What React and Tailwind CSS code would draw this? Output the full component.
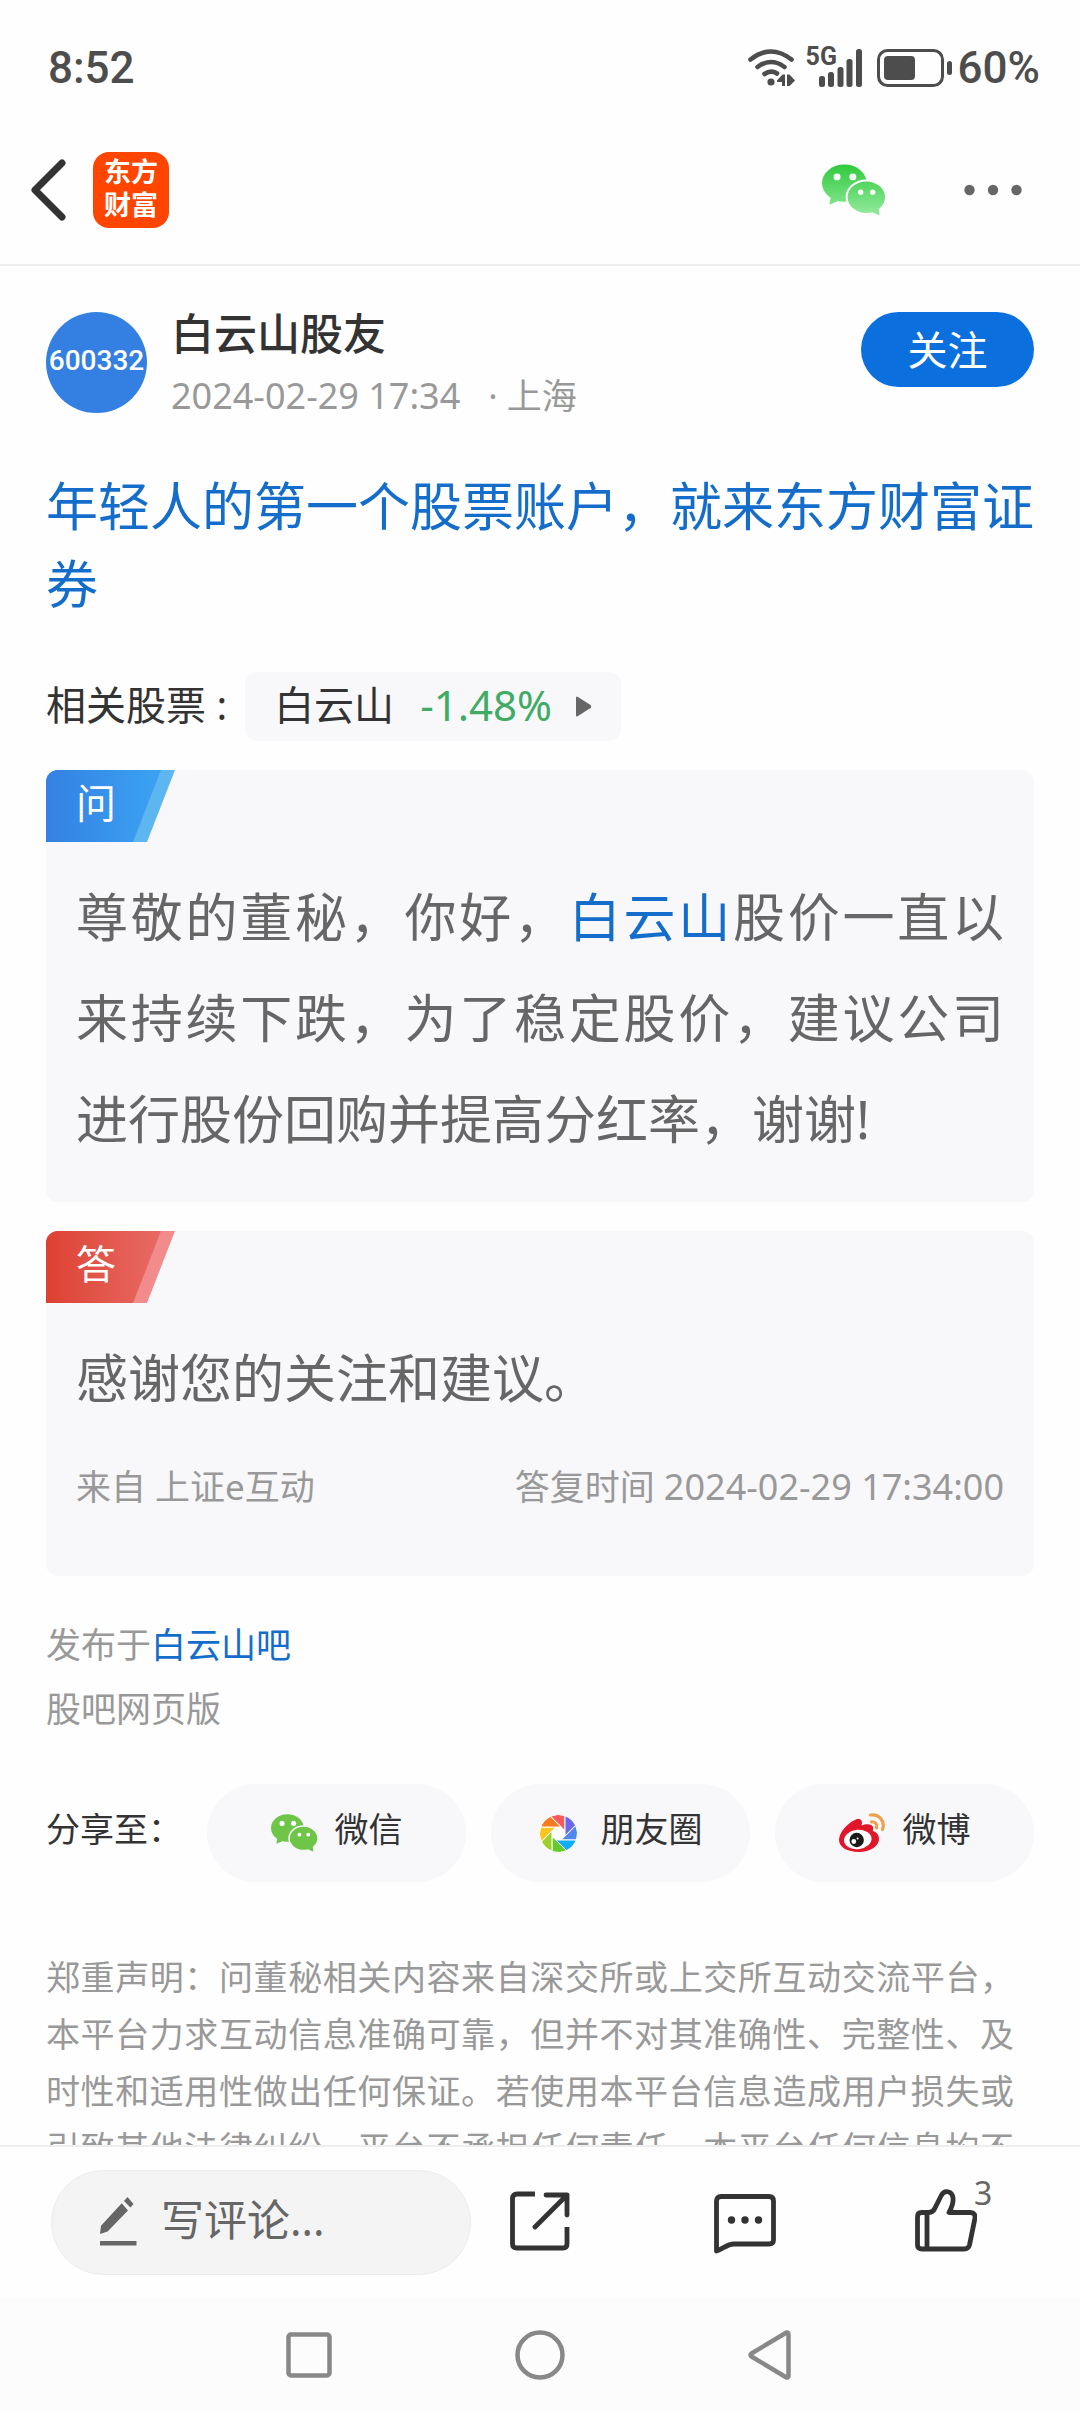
import { useState } from "react";

const SHUTTER_COLORS = [
  "#f65a5a",
  "#6a68e8",
  "#5287ee",
  "#10adfa",
  "#62cc2c",
  "#a0d02c",
  "#fac51e",
  "#f87a20",
];

const disclaimer =
  "郑重声明：问董秘相关内容来自深交所或上交所互动交流平台，本平台力求互动信息准确可靠，但并不对其准确性、完整性、及时性和适用性做出任何保证。若使用本平台信息造成用户损失或引致其他法律纠纷，平台不承担任何责任。本平台任何信息均不";

export default function App() {
  return (
    <div className="flex h-screen flex-col bg-[#fefefe] font-['Noto_Sans','Noto_Sans_CJK_SC',sans-serif] text-[#333333]">
      <StatusBar />
      <Header />
      <main className="min-h-0 flex-1 overflow-hidden px-[46px] pt-[46px]">
        <Author />
        <h1 className="mt-[54px] text-[52px] leading-[78px] text-[#146dcb]">
          年轻人的第一个股票账户，就来东方财富证券
        </h1>
        <RelatedStock />

        <QaCard label="问" type="question">
          <p className="text-justify text-[52px] leading-[101px] text-[#666666]">
            尊敬的董秘，你好，
            <a href="#stock" className="text-[#146dcb]">
              白云山
            </a>
            股价一直以来持续下跌，为了稳定股价，建议公司进行股份回购并提高分红率，谢谢!
          </p>
        </QaCard>

        <QaCard label="答" type="answer">
          <p className="text-[52px] leading-[101px] text-[#666666]">
            感谢您的关注和建议。
          </p>
          <div className="mt-[34px] mb-[31px] flex justify-between text-[35px] leading-[50px] text-[#999999]">
            <span>来自 上证e互动</span>
            <span>
              答复时间 <time className="text-[36px]">2024-02-29 17:34:00</time>
            </span>
          </div>
        </QaCard>

        <div className="mt-[37px] text-[35px] leading-[64px] text-[#999999]">
          <p>
            发布于
            <a href="#bar" className="text-[#146dcb]">
              白云山吧
            </a>
          </p>
          <p>股吧网页版</p>
        </div>

        <ShareRow />

        <p className="mt-[67px] pr-5 text-justify text-[34px] leading-[57px] text-[#999999] [text-align-last:justify]">
          {disclaimer}
        </p>
      </main>
      <BottomBar />
      <SystemNav />
    </div>
  );
}

const StatusBar = () => {
  return (
    <div className="flex h-[136px] shrink-0 items-center justify-between pr-10 pl-12 font-[Roboto,'Noto_Sans_CJK_SC',sans-serif] text-[44px] leading-[64px] font-medium text-[#4d4d4d]">
      <span>8:52</span>
      <div className="flex items-center">
        <svg width="48" height="38" viewBox="0 0 48 38" fill="none" stroke="currentColor" strokeLinecap="round">
          <path d="M2.5 10.5Q23-5.5 43.5 10.5" strokeWidth="4.6" />
          <path d="M9.5 18Q23 8 36.5 18" strokeWidth="4.6" />
          <path d="M16.5 25Q23 20.5 29 24.5" strokeWidth="4.6" />
          <circle cx="23" cy="33" r="3.6" fill="currentColor" stroke="none" />
          <path
            d="M29 31.5 34.5 25.5H37V37H34V33H29ZM39 25.5H41.5L47 31.5 41.5 37H39Z"
            fill="currentColor"
            stroke="none"
          />
        </svg>
        <div className="relative ml-[22px]">
          <span className="absolute -top-2 -left-3 text-[25px] leading-[32px] font-bold">
            5G
          </span>
          <svg width="45" height="38" viewBox="0 0 45 38" fill="currentColor">
            <rect x="1" y="27" width="6" height="11" rx="2.5" />
            <rect x="10" y="23" width="6" height="15" rx="2.5" />
            <rect x="19.5" y="18" width="6" height="20" rx="2.5" />
            <rect x="28.5" y="10" width="6" height="28" rx="2.5" />
            <rect x="38" y="0" width="6" height="38" rx="2.5" />
          </svg>
        </div>
        <svg className="ml-[14px]" width="77" height="38" viewBox="0 0 77 38" fill="currentColor">
          <rect x="1.5" y="1.5" width="64" height="35" rx="9" fill="none" stroke="currentColor" strokeWidth="3" />
          <rect x="7" y="7" width="31" height="24" rx="4" />
          <rect x="70" y="12" width="5" height="14" rx="2.5" />
        </svg>
        <span className="ml-1">60%</span>
      </div>
    </div>
  );
};

const Header = () => {
  return (
    <header className="flex h-[130px] shrink-0 items-center border-b-2 border-[#eeeeee] pr-[58px] pb-[20px] pl-[30px]">
      <button aria-label="返回">
        <svg width="36" height="62" viewBox="0 0 36 62" fill="none" stroke="#333333" strokeWidth="7" strokeLinecap="round" strokeLinejoin="round">
          <path d="M32 4 5 31 32 58" />
        </svg>
      </button>
      <a
        href="#home"
        className="ml-[27px] flex size-[76px] flex-col items-center justify-center rounded-2xl bg-[#ff4500] pb-1 text-[27px] leading-[33px] font-bold text-white"
      >
        <span>东方</span>
        <span>财富</span>
      </a>
      <button aria-label="微信" className="ml-auto">
        <WechatIcon className="h-[52px] w-16" gradient />
      </button>
      <button aria-label="更多" className="ml-[78px]">
        <svg width="58" height="12" viewBox="0 0 58 12" fill="#666666">
          <circle cx="5.5" cy="6" r="5.2" />
          <circle cx="29" cy="6" r="5.2" />
          <circle cx="52.5" cy="6" r="5.2" />
        </svg>
      </button>
    </header>
  );
};

const Author = () => {
  const [followed, setFollowed] = useState(false);

  return (
    <section className="flex h-[101px] items-start">
      <div className="flex size-[101px] items-center justify-center rounded-full bg-[#3480e2] pb-1 font-[Roboto,sans-serif] text-[28px] font-medium text-white">
        600332
      </div>
      <div className="ml-6">
        <div className="text-[43px] leading-[44px] font-medium">白云山股友</div>
        <div className="mt-4 flex text-[35px] leading-[48px] text-[#999999]">
          <time className="text-[36px]">2024-02-29 17:34</time>
          <span className="ml-7">· 上海</span>
        </div>
      </div>
      <button
        onClick={() => setFollowed(!followed)}
        className="ml-auto h-[75px] w-[173px] rounded-full bg-[#0b6fdd] text-[40px] leading-[75px] text-white"
      >
        {followed ? "已关注" : "关注"}
      </button>
    </section>
  );
};

const RelatedStock = () => {
  return (
    <div className="mt-[49px] flex items-center text-[40px] leading-[65px]">
      <span className="pb-1">相关股票 :</span>
      <a
        href="#quote"
        className="ml-[18px] flex h-[69px] items-center rounded-xl bg-[#f8f8fb] px-[29px]"
      >
        <span className="pb-1">白云山</span>
        <span className="ml-[26px] pb-1 text-[42px] text-[#3fab63]">-1.48%</span>
        <svg className="ml-6" width="16" height="21" viewBox="0 0 16 21" fill="#666666">
          <path d="M0 2Q0-.5 2 1L14.5 9Q16 10.5 14.5 12L2 20Q0 21.5 0 19Z" />
        </svg>
      </a>
    </div>
  );
};

const QaCard = ({ label, type, children }) => {
  const isQuestion = type === "question";
  return (
    <section className="mt-[29px] overflow-hidden rounded-xl bg-[#f8f8fb] pb-[33px]">
      <div
        className={`h-[72px] w-[129px] [clip-path:polygon(0_0,100%_0,101px_100%,0_100%)] ${
          isQuestion ? "bg-[#5db6f0]" : "bg-[#f28b8b]"
        }`}
      >
        <div
          className={`h-full w-[115px] bg-linear-to-r pl-[30px] text-[40px] leading-[66px] text-white [clip-path:polygon(0_0,100%_0,87px_100%,0_100%)] ${
            isQuestion
              ? "from-[#3580e3] to-[#3ba3f1]"
              : "from-[#dd4031] to-[#e86a64]"
          }`}
        >
          {label}
        </div>
      </div>
      <div className="mt-6 px-[30px]">{children}</div>
    </section>
  );
};

const ShareRow = () => {
  const targets = [
    { name: "微信", icon: <WechatIcon className="mr-[17px] h-[38px] w-[47px]" /> },
    { name: "朋友圈", icon: <MomentsIcon /> },
    { name: "微博", icon: <WeiboIcon /> },
  ];

  return (
    <div className="mt-[43px] flex items-center gap-[25px] text-[34px] leading-[44px]">
      <span className="pb-2">分享至：</span>
      {targets.map((target) => (
        <button
          key={target.name}
          className="flex h-[98px] flex-1 items-center justify-center rounded-full bg-[#f8f8fb]"
        >
          {target.icon}
          <span className="pb-2">{target.name}</span>
        </button>
      ))}
    </div>
  );
};

const BottomBar = () => {
  return (
    <footer className="flex h-[153px] shrink-0 items-center border-t-2 border-[#eeeeee] bg-[#fefefe] pr-[103px] pb-px pl-[51px]">
      <label className="flex h-[105px] w-[420px] items-center rounded-full border border-[#ececec] bg-[#f4f4f4] pl-12">
        <svg className="shrink-0" width="37" height="50" viewBox="0 0 37 50" fill="#666666">
          <path d="M27.5 0 33.5 7 30.5 10.5 24 4ZM21.7 6.3 28 13.5 7.6 34.5 0 37 1 28.7ZM0 44H36.5V48.5H0Z" />
        </svg>
        <input
          type="text"
          aria-label="写评论"
          placeholder="写评论..."
          className="ml-6 w-full min-w-0 bg-transparent pb-1 text-[43px] leading-[60px] outline-none placeholder:text-[#666666]"
        />
      </label>
      <div className="ml-[39px] flex flex-1 items-center justify-between">
        <button aria-label="分享">
          <svg width="60" height="62" viewBox="0 0 60 62" fill="none" stroke="#333333" strokeWidth="4.8" strokeLinejoin="round">
            <path d="M25 3H7Q2.5 3 2.5 7.5V53Q2.5 57 7 57H53Q57 57 57 53V36" />
            <path d="M36 4H57V24M57 4 25 36" strokeLinecap="round" />
          </svg>
        </button>
        <button aria-label="评论" className="pt-1 pl-1">
          <svg width="62" height="62" viewBox="0 0 62 62" fill="none" stroke="#333333" strokeWidth="4.8" strokeLinejoin="round">
            <path d="M2.5 58V8Q2.5 3.5 7 3.5H55Q59.5 3.5 59.5 8V47Q59.5 51 55 51H20C13 51 9 56 2.5 58Z" />
            <g fill="#333333" stroke="none">
              <circle cx="17.5" cy="27" r="3.7" />
              <circle cx="31" cy="27" r="3.7" />
              <circle cx="44.5" cy="27" r="3.7" />
            </g>
          </svg>
        </button>
        <button aria-label="点赞" className="relative">
          <svg width="62" height="66" viewBox="0 0 62 66" fill="none" stroke="#333333" strokeWidth="4.8" strokeLinejoin="round">
            <path d="M2.5 28Q2.5 23.5 6.5 23.5H14Q18 23.5 20 19L26 7C29 .5 37 1.5 38 9 38.5 14 36.5 19 34 23.5H55Q60.5 23.5 60 29L54.5 56Q53.5 60 49 60H7Q2.5 60 2.5 56Z" />
            <path d="M12 24V60" />
          </svg>
          <span className="absolute -top-4 left-[59px] text-[32px] leading-[40px] text-[#666666]">
            3
          </span>
        </button>
      </div>
    </footer>
  );
};

const SystemNav = () => {
  return (
    <nav className="flex h-[114px] shrink-0 items-center justify-center gap-[183px] bg-[#fcfcfc] pr-0.5">
      <button aria-label="最近任务">
        <svg width="46" height="46" viewBox="0 0 46 46" fill="none" stroke="#888888" strokeWidth="4.5">
          <rect x="2.5" y="2.5" width="41" height="41" rx="2.5" />
        </svg>
      </button>
      <button aria-label="主页">
        <svg width="50" height="50" viewBox="0 0 50 50" fill="none" stroke="#888888" strokeWidth="4.5">
          <circle cx="25" cy="25" r="22.5" />
        </svg>
      </button>
      <button aria-label="后退">
        <svg width="44" height="50" viewBox="0 0 44 50" fill="none" stroke="#888888" strokeWidth="4.5" strokeLinejoin="round">
          <path d="M38.5 2.5Q40.5 2 40.5 4.5V45.5Q40.5 48 38.5 47.5L3.5 26.5Q1.5 25 3.5 23.5Z" />
        </svg>
      </button>
    </nav>
  );
};

const WechatIcon = ({ className, gradient }) => {
  return (
    <svg className={className} viewBox="0 0 65 52">
      <defs>
        <linearGradient id="wechatGreen" gradientUnits="userSpaceOnUse" x1="0" y1="0" x2="0" y2="52">
          <stop offset="0" stopColor="#2fca3c" />
          <stop offset="1" stopColor="#95eb9f" />
        </linearGradient>
      </defs>
      <g fill={gradient ? "url(#wechatGreen)" : "#6fc548"}>
        <ellipse cx="22.7" cy="19" rx="22.7" ry="19" />
        <path d="M9 32 7.5 41 16 37.5Z" />
        <ellipse
          cx="45"
          cy="33.3"
          rx="20"
          ry="17"
          stroke={gradient ? "#fefefe" : "#f8f8fb"}
          strokeWidth="2"
        />
        <path d="M51 48.5 58.5 52 57.5 43Z" />
      </g>
      <g fill="#ffffff">
        <circle cx="15.3" cy="12.7" r="3.5" />
        <circle cx="31.3" cy="12.7" r="3.5" />
        <circle cx="39.3" cy="28.3" r="2.7" />
        <circle cx="51.5" cy="28.3" r="2.7" />
      </g>
    </svg>
  );
};

const MomentsIcon = () => {
  return (
    <svg className="mr-[23px]" width="39" height="39" viewBox="-19.5 -19.5 39 39">
      <circle r="8" fill="#ffffff" />
      {SHUTTER_COLORS.map((color, i) => (
        <path
          key={color}
          d="M6.5-2.7V-17.9A19 19 0 0 0-8-17.2Z"
          fill={color}
          stroke="#ffffff"
          strokeWidth="1"
          transform={`rotate(${i * 45})`}
        />
      ))}
    </svg>
  );
};

const WeiboIcon = () => {
  return (
    <svg className="mr-[17px]" width="47" height="40" viewBox="0 0 47 40">
      <path
        d="M0 27C0 20 8 10 17 6.5 22 5 24 8 22.5 12.5 27 10.5 33 10.5 34 14 34.5 16 33.5 17 34 18 38 19.5 40 22 40 26 40 33 31 39 20 39 8 39 0 34 0 27Z"
        fill="#e2162b"
      />
      <ellipse cx="18.8" cy="26.5" rx="13.8" ry="9.7" fill="#ffffff" transform="rotate(-6 18.8 26.5)" />
      <circle cx="17.7" cy="27" r="7.2" fill="#1a1a1a" />
      <circle cx="14.8" cy="28.5" r="2.4" fill="#ffffff" />
      <circle cx="18.6" cy="25.5" r="1" fill="#ffffff" />
      <g fill="none" stroke="#f0a04b" strokeWidth="3.2" strokeLinecap="round">
        <path d="M31.5 2C40 .8 46.5 8 43.5 16.5" />
        <path d="M32.5 8.8C36 8.5 38.5 11 37.5 14.8" />
      </g>
    </svg>
  );
};
